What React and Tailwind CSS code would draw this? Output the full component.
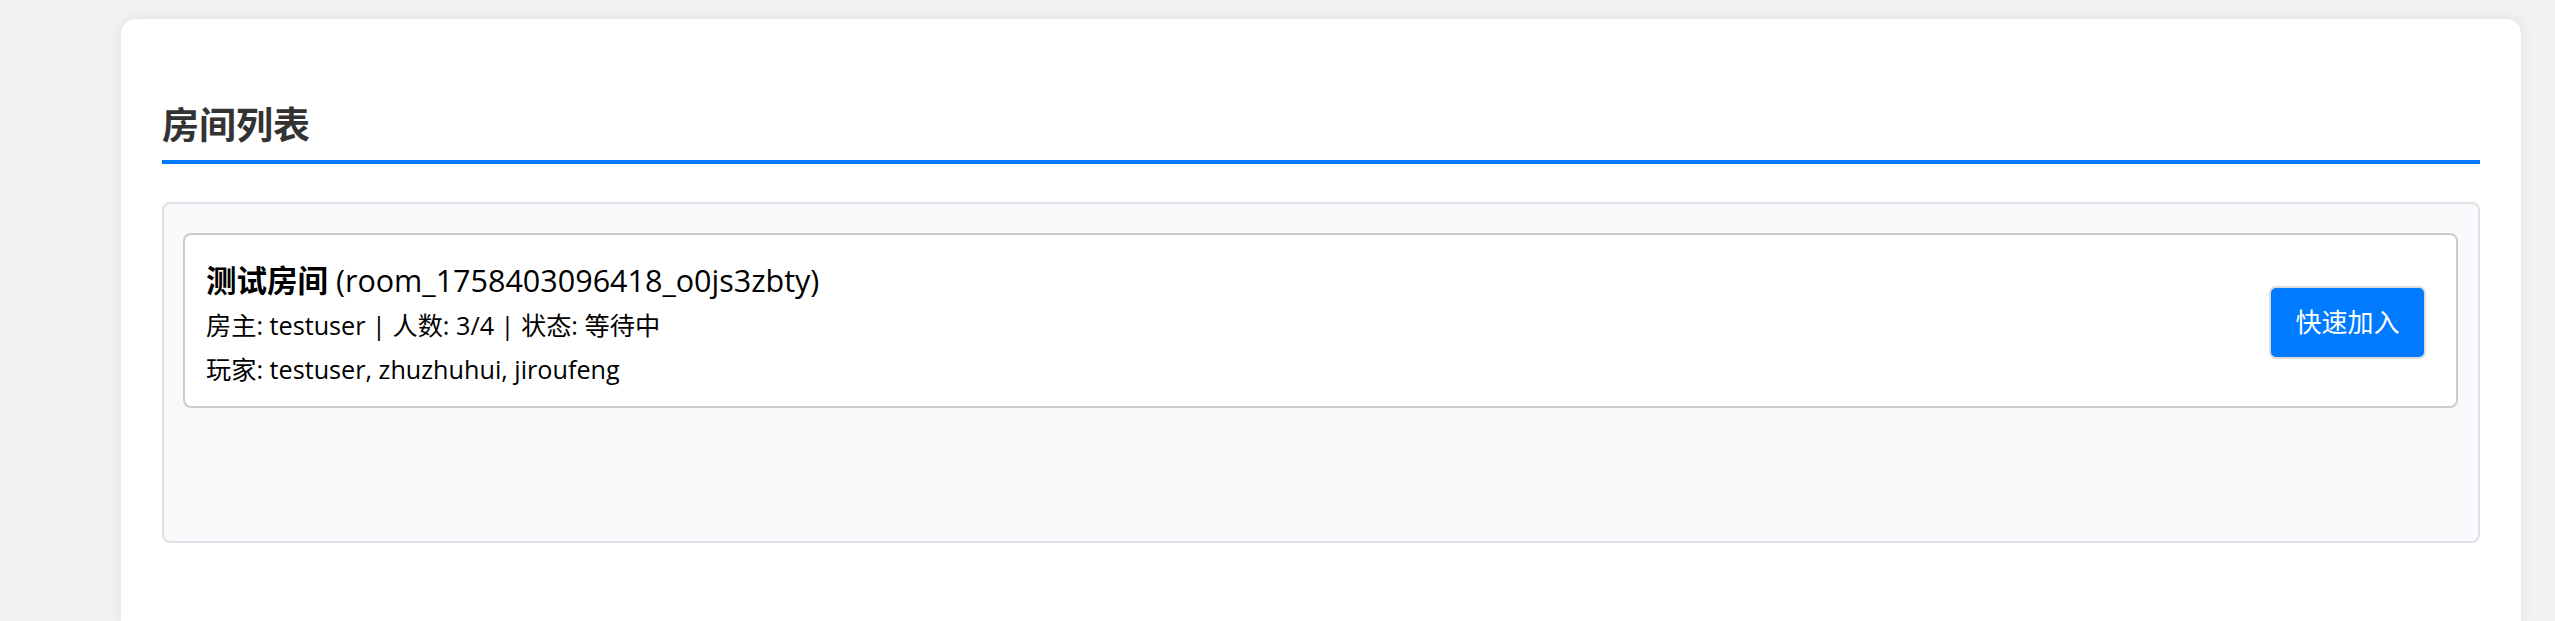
export default function App() {
  const room = {
    name: '测试房间',
    id: 'room_1758403096418_o0js3zbty',
    owner: 'testuser',
    count: '3/4',
    status: '等待中',
    players: ['testuser', 'zhuzhuhui', 'jiroufeng'],
  }

  return (
    <div className="min-h-[621px] bg-[#f2f2f2] pt-[19px] font-['Open_Sans','Noto_Sans_CJK_SC',sans-serif] text-[#212529]">
      <div className="ml-[121px] h-[602px] w-[2400px] rounded-t-[15px] bg-white px-[41px] pt-[84px] shadow-[0_0_16px_rgba(0,0,0,0.08)]">
        <h2 className="border-b-4 border-[#007bff] pb-[13px] text-[37px] font-bold leading-[44px] text-[#333]">房间列表</h2>

        <div className="mt-[38px] h-[341px] rounded-[8px] border-2 border-[#dee2e6] bg-[#f8f9fa] pl-[19px] pr-[20px] pt-[29px]">
          <div className="flex items-center justify-between rounded-[8px] border-2 border-[#cccccc] bg-white pb-[15px] pl-[21px] pr-[30px] pt-[22px]">
            <div>
              <div className="text-[30.5px] leading-[46px] text-black">
                <span className="font-bold">{room.name}</span> ({room.id})
              </div>
              <div className="text-[25.2px] leading-[44px] text-black">
                房主: {room.owner} | 人数: {room.count} | 状态: {room.status}
              </div>
              <div className="text-[25.2px] leading-[44px] text-black">玩家: {room.players.join(', ')}</div>
            </div>
            <button className="mb-[3px] h-[73px] w-[157px] rounded-[7px] border-2 border-[#dddddd] bg-[#007bff] text-[26px] text-white">
              快速加入
            </button>
          </div>
        </div>
      </div>
    </div>
  )
}
